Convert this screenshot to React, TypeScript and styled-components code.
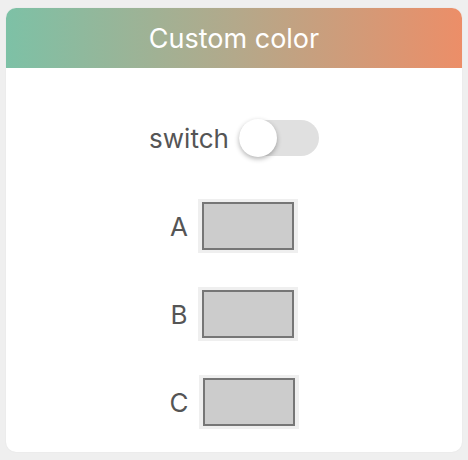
import styled, { createGlobalStyle } from 'styled-components'
import { useState } from 'react'

const GlobalStyle = createGlobalStyle`
  html, body {
    margin: 0;
    padding: 0;
    background: #efefef;
  }
  body {
    font-family: Inter, 'Liberation Sans', sans-serif;
  }
`

const Page = styled.div`
  padding: 8px 6px;
  box-sizing: border-box;
  width: 468px;
  height: 460px;
`

const Card = styled.div`
  background: #ffffff;
  border-radius: 10px;
  overflow: hidden;
  box-shadow: 0 0 2px rgba(0, 0, 0, 0.06);
  height: 444px;
`

const Header = styled.div`
  height: 60px;
  display: flex;
  align-items: center;
  justify-content: center;
  background: linear-gradient(90deg, #7dc1a6 0%, #b3a98b 50%, #ec8e68 100%);
  color: #ffffff;
  font-size: 27px;
  font-weight: 400;
  padding-top: 1px;
  box-sizing: border-box;
`

const Body = styled.div`
  display: flex;
  flex-direction: column;
  gap: 34px;
  padding: 43px 0 23px;
`

const Row = styled.div`
  height: 54px;
  display: flex;
  align-items: center;
  justify-content: center;
  gap: 10px;
`

const Label = styled.span`
  font-size: 26px;
  color: #555555;
`

const Track = styled.button<{ $on: boolean }>`
  position: relative;
  width: 80px;
  height: 36px;
  border: none;
  padding: 0;
  border-radius: 18px;
  background: ${(p) => (p.$on ? '#7dc1a6' : '#e0e0e0')};
  cursor: pointer;
`

const Knob = styled.span<{ $on: boolean }>`
  position: absolute;
  top: -1px;
  left: ${(p) => (p.$on ? '42px' : '0')};
  width: 38px;
  height: 38px;
  border-radius: 50%;
  background: #ffffff;
  box-shadow: 0 2px 5px rgba(0, 0, 0, 0.3);
  transition: left 0.2s;
`

const Swatch = styled.div`
  width: 100px;
  height: 54px;
  box-sizing: border-box;
  padding: 3px 4px;
  background: #efefef;
  display: flex;
`

const SwatchInner = styled.div<{ $color: string }>`
  flex: 1;
  border: 2px solid #767676;
  background: ${(p) => p.$color};
`

const colors = [
  { key: 'A', value: '#cccccc' },
  { key: 'B', value: '#cccccc' },
  { key: 'C', value: '#cccccc' },
]

export default function App() {
  const [on, setOn] = useState(false)

  return (
    <>
      <GlobalStyle />
      <Page>
        <Card>
          <Header>Custom color</Header>
          <Body>
            <Row>
              <Label>switch</Label>
              <Track $on={on} onClick={() => setOn((prev) => !prev)}>
                <Knob $on={on} />
              </Track>
            </Row>
            {colors.map((c) => (
              <Row key={c.key}>
                <Label>{c.key}</Label>
                <Swatch>
                  <SwatchInner $color={c.value} />
                </Swatch>
              </Row>
            ))}
          </Body>
        </Card>
      </Page>
    </>
  )
}
